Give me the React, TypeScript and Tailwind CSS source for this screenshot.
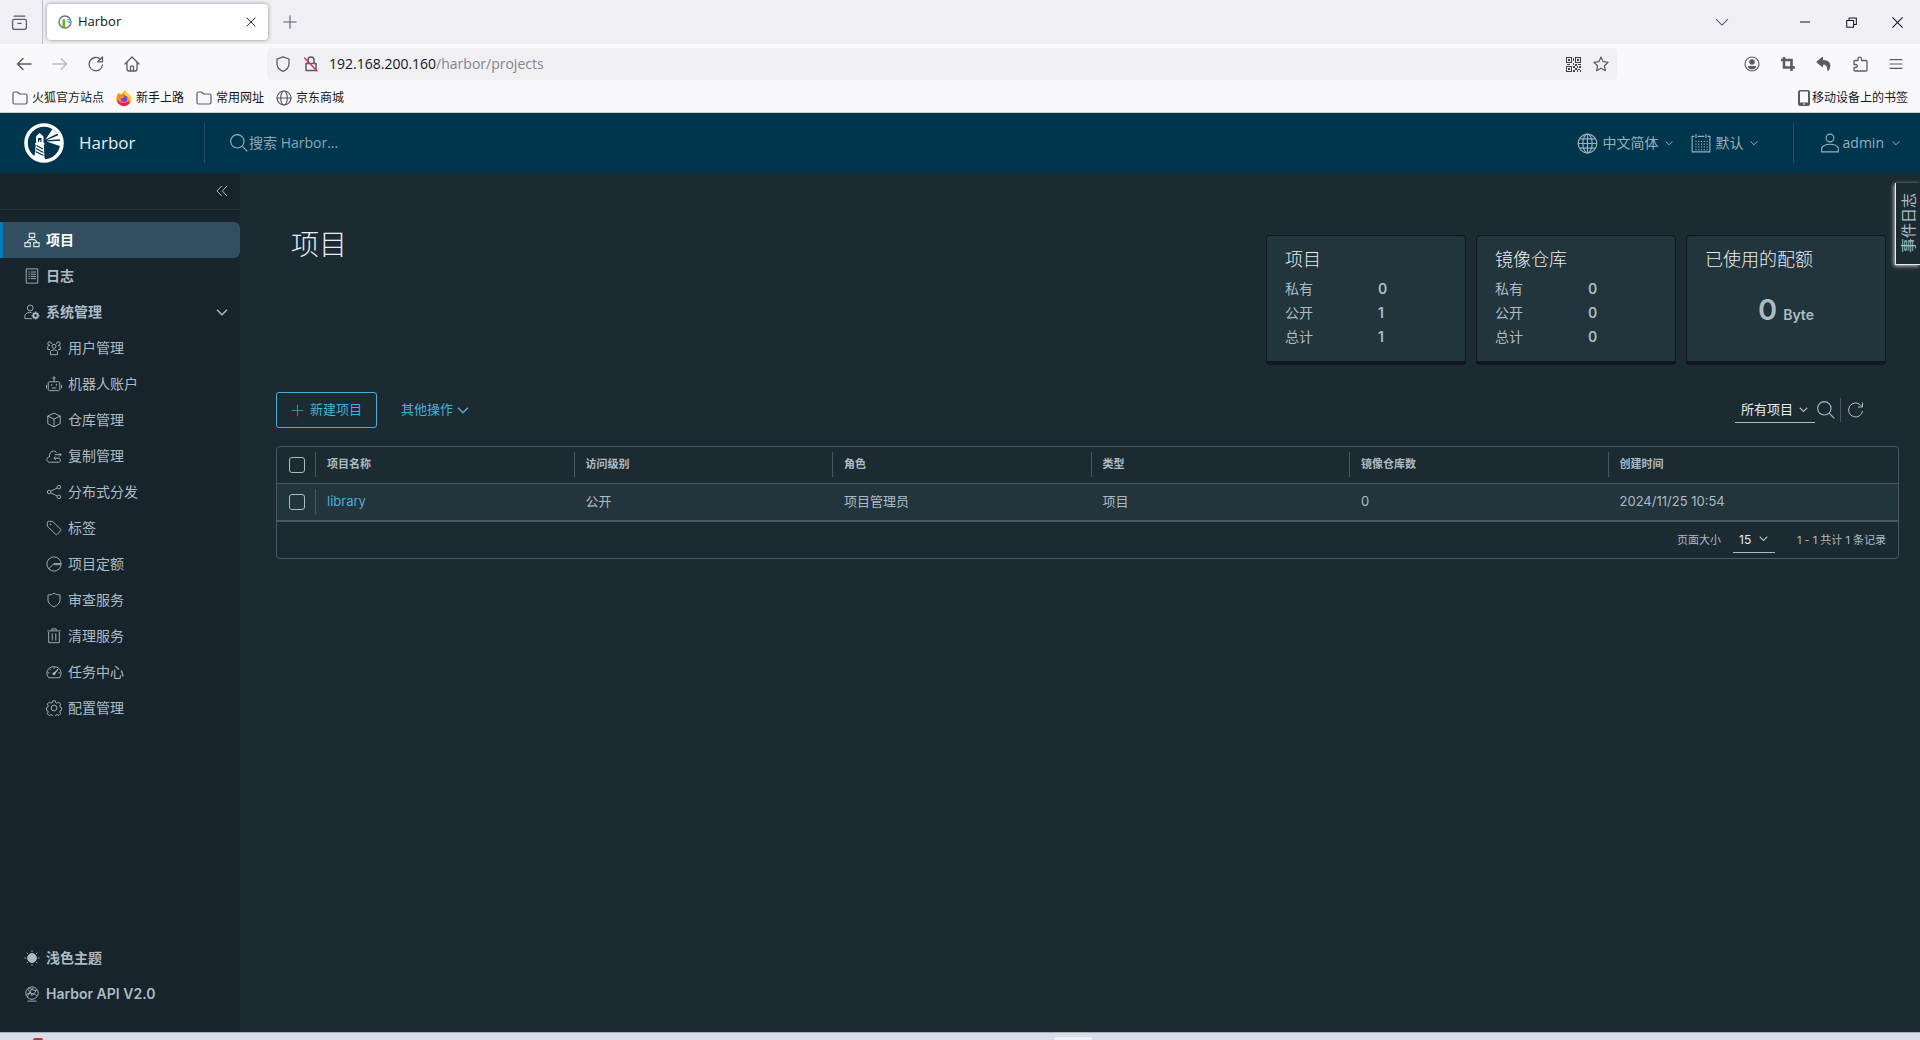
import type { ReactNode } from 'react';

type IconProps = { size?: number; className?: string; children: ReactNode };

// 36-unit outline icon used all over the Harbor UI
function Icon({ size = 16, className = '', children }: IconProps) {
  return (
    <svg
      width={size}
      height={size}
      viewBox="0 0 36 36"
      fill="none"
      stroke="currentColor"
      strokeWidth={2}
      className={`shrink-0 ${className}`}
      aria-hidden="true"
    >
      {children}
    </svg>
  );
}

// 16-unit icon used by the browser bars
function BarIcon({ size = 16, className = '', children }: IconProps) {
  return (
    <svg
      width={size}
      height={size}
      viewBox="0 0 16 16"
      fill="none"
      stroke="currentColor"
      strokeWidth={1.2}
      strokeLinecap="round"
      strokeLinejoin="round"
      className={`shrink-0 ${className}`}
      aria-hidden="true"
    >
      {children}
    </svg>
  );
}

const Chevron = ({ size = 10, className = '' }: { size?: number; className?: string }) => (
  <Icon size={size} className={className}>
    <path d="M3 11l15 15 15-15" strokeWidth={4.5} />
  </Icon>
);

const SearchIcon = ({ size = 20 }: { size?: number }) => (
  <Icon size={size}>
    <circle cx="15" cy="15" r="12" />
    <path d="M24 24l9 9" />
  </Icon>
);

const icons = {
  projects: (
    <>
      <path d="M12 3h12v9H12zM2 24h12v9H2zM22 24h12v9H22zM18 12v5M8 24v-3l4-4h12l4 4v3" strokeWidth={2.6} />
    </>
  ),
  logs: (
    <>
      <path d="M5 2h26v32H5z" />
      <path d="M10 9h3M10 14h3M10 19h3M10 24h3M15 9h12M15 14h12M15 19h12M15 24h12" />
    </>
  ),
  admin: (
    <>
      <circle cx="14" cy="9" r="6.5" />
      <path d="M18 33H2v-8c3-5 8-7 15-6" />
      <circle cx="26" cy="26" r="5" strokeWidth={4} />
      <path
        d="M26 17v3M26 32v3M17 26h3M32 26h3M20 20l2 2M30 30l2 2M32 20l-2 2M20 32l2-2"
        strokeWidth={3}
      />
    </>
  ),
  users: (
    <>
      <circle cx="18" cy="14" r="4.5" />
      <path d="M10 33v-7c2-5 14-5 16 0v7zM4 22v-7c0-2 2-3 5-3M32 22v-7c0-2-2-3-5-3M4 21l5 1M32 21l-5 1" />
      <path d="M12 9a4 4 0 1 0-4 3M24 9a4 4 0 1 1 4 3" />
    </>
  ),
  robot: (
    <>
      <path d="M8 13h20c3 0 3 3 3 3v14c0 3-3 3-3 3H8c-3 0-3-3-3-3V16s0-3 3-3zM18 13V7M1 20v8M35 20v8M13 27h10" />
      <circle cx="18" cy="4.500" r="2.500" />
      <circle cx="12.500" cy="20" r="1" />
      <circle cx="23.500" cy="20" r="1" />
    </>
  ),
  registries: <path d="M18 2.500l14 6.500v17l-14 7.500L4 26V9zM4 9l14 7 14-7M18 16v17" />,
  replication: (
    <>
      <path d="M30 24c4 2 4 8-3 8H8C0 32 0 20 8 20 6 7 20 3 24 11" />
      <path d="M20 15h14M30 11l4 4-4 4M31 23H18M22 19l-4 4 4 4" />
    </>
  ),
  share: (
    <>
      <circle cx="7" cy="18" r="4" />
      <circle cx="29" cy="7" r="4" />
      <circle cx="29" cy="29" r="4" />
      <path d="M11 16l14-7M11 20l14 7" />
    </>
  ),
  tag: (
    <>
      <path d="M3 5.500C3 4 4 3 5.500 3H15l18 18c1 1 1 2 0 3l-8 8.500c-1 1-2 1-3 0L3 14z" />
      <circle cx="10" cy="10" r="1" />
    </>
  ),
  quota: (
    <>
      <circle cx="18" cy="18" r="16" />
      <path d="M6 29l12-12h16M18 19.500h15" />
    </>
  ),
  shield: <path d="M18 2.500c4 3 8 4 13.500 4V17c0 8-6 13-13.500 16.500C10.500 30 4.500 25 4.500 17V6.500c5.500 0 9.500-1 13.500-4z" />,
  trash: <path d="M6 9v24h24V9M3 6.500h30M13 5V2h10v3M14 12v16M22 12v16" />,
  dashboard: (
    <>
      <path d="M6 31C-3 20 4 6 18 6s21 14 12 25zM18 7v4M4 20h4M28 20h4M8 11l3 3" />
      <path d="M18 22l9-10" strokeWidth={3} />
      <circle cx="18" cy="22" r="2.500" fill="currentColor" />
    </>
  ),
  cog: (
    <>
      <circle cx="18" cy="18" r="6.500" />
      <path d="M15 2h6l1 4 3 1 4-2 4 4-2 4 1 3 3 1v6l-3 1-1 3 2 4-4 4-4-2-3 1-1 3h-6l-1-3-3-1-4 2-4-4 2-4-1-3-3-1v-6l3-1 1-3-2-4 4-4 4 2 3-1z" />
    </>
  ),
  sun: (
    <>
      <circle cx="18" cy="18" r="10" fill="currentColor" />
      <path d="M18 1v4M18 31v4M1 18h4M31 18h4M6 6l3 3M27 27l3 3M30 6l-3 3M6 30l3-3" />
    </>
  ),
  api: (
    <>
      <circle cx="18" cy="16" r="14" />
      <path d="M7 7c5 2 9 8 10 14 4-1 9-6 10-12M8 26c1-9 7-17 14-22M5 19c8-4 18-3 24 3M10 4c6 2 10 7 18 6" />
      <path d="M8 34h20" />
    </>
  ),
};

const subItems: { label: string; icon: keyof typeof icons }[] = [
  { label: '用户管理', icon: 'users' },
  { label: '机器人账户', icon: 'robot' },
  { label: '仓库管理', icon: 'registries' },
  { label: '复制管理', icon: 'replication' },
  { label: '分布式分发', icon: 'share' },
  { label: '标签', icon: 'tag' },
  { label: '项目定额', icon: 'quota' },
  { label: '审查服务', icon: 'shield' },
  { label: '清理服务', icon: 'trash' },
  { label: '任务中心', icon: 'dashboard' },
  { label: '配置管理', icon: 'cog' },
];

const stats = [
  { title: '项目', rows: [['私有', '0'], ['公开', '1'], ['总计', '1']] },
  { title: '镜像仓库', rows: [['私有', '0'], ['公开', '0'], ['总计', '0']] },
];

const columns = ['项目名称', '访问级别', '角色', '类型', '镜像仓库数', '创建时间'];

const projects = [
  {
    name: 'library',
    access: '公开',
    role: '项目管理员',
    type: '项目',
    repos: 0,
    created: '2024/11/25 10:54',
  },
];

function HarborLogo() {
  return (
    <svg width="40" height="40" viewBox="0 0 40 40" className="shrink-0" aria-hidden="true">
      <circle cx="20" cy="20" r="18" fill="none" stroke="#fff" strokeWidth="3.600" />
      <path d="M15.500 10l4 3.500v6.500h1v1.500h-.7L20.500 36l-10-2.500 1.300-12h-.8V20h1v-6.500z" fill="#fff" />
      <path d="M14 15h3.500v4h-1.200v-2h-1.100v2H14z" fill="#00364d" />
      <path d="M12.500 22.500l6.500 3.500M12 25.500l7.500 4M11.500 28.500l8 4" stroke="#00364d" strokeWidth="1.300" />
      <path d="M21.500 16.500L28.500 6l5 4.500zM22.500 17.300L36 11.500v4.700zM22.500 18.500l15.500-.8v6z" fill="#fff" />
      <path d="M9 33c4-1 8 0 12 2.500l-1 3c-4 0-9-2-11-5.500z" fill="#fff" />
    </svg>
  );
}

function BrowserChrome() {
  const iconBtn = 'flex w-9 h-8 items-center justify-center';
  return (
    <div className="font-['Open_Sans','Noto_Sans_CJK_SC',sans-serif] text-[#15141a]">
      {/* Tabs */}
      <div className="flex h-11 items-center bg-[#f0eff4] text-[#5b5b66]">
        <button className="flex h-11 w-[43px] items-center justify-center border-r border-[#bfbfc9] pr-1" aria-label="历史标签">
          <BarIcon size={17}>
            <path d="M1.500 6.500c0-1 .5-1.500 1.500-1.500h10c1 0 1.500.5 1.500 1.500v6c0 1.500-.5 2-2 2h-9c-1.500 0-2-.5-2-2zM3 2h10M6.500 8.800h3" />
          </BarIcon>
        </button>
        <div className="ml-1 flex h-9 w-[221px] items-center rounded bg-white pl-[11px] pr-[7px] shadow-[0_0_4px_rgba(0,0,0,0.4)]">
          <svg width="14" height="14" viewBox="0 0 40 40" aria-hidden="true">
            <circle cx="20" cy="20" r="17" fill="#fff" stroke="#737373" strokeWidth="4" />
            <path d="M13 12h7v25l-7-3z" fill="#60b515" />
            <path d="M22 16l12-8 2 6zM22 18l15 0v7z" fill="#5aa7dc" />
          </svg>
          <span className="ml-[6px] flex-1 text-[13px] text-[#15141a]">Harbor</span>
          <button className="flex h-5 w-5 items-center justify-center text-[#15141a]" aria-label="关闭标签页">
            <BarIcon size={12}>
              <path d="M2.500 2.500l11 11M13.500 2.500l-11 11" />
            </BarIcon>
          </button>
        </div>
        <button className={`${iconBtn} ml-1`} aria-label="新建标签页">
          <BarIcon size={14}>
            <path d="M8 1v14M1 8h14" />
          </BarIcon>
        </button>
        <div className="flex-1" />
        <button className={iconBtn} aria-label="列出所有标签页">
          <BarIcon size={14}>
            <path d="M1.500 5L8 11.500 14.500 5" />
          </BarIcon>
        </button>
        <div className="ml-[42px] flex text-[#15141a]">
          <button className="flex h-8 w-[46px] items-center justify-center" aria-label="最小化">
            <BarIcon size={10}>
              <path d="M0 8h16" strokeWidth={1.6} />
            </BarIcon>
          </button>
          <button className="flex h-8 w-[46px] items-center justify-center" aria-label="还原">
            <BarIcon size={11}>
              <path d="M1 5h10v10H1zM4.500 5V1.500H15V11h-4" strokeWidth={1.5} />
            </BarIcon>
          </button>
          <button className="flex h-8 w-[46px] items-center justify-center" aria-label="关闭">
            <BarIcon size={11}>
              <path d="M1 1l14 14M15 1L1 15" strokeWidth={1.5} />
            </BarIcon>
          </button>
        </div>
      </div>

      {/* Address bar */}
      <div className="flex h-10 items-center bg-[#f9f9fb] pl-[6px] pr-[6px] text-[#5b5b66]">
        <button className={iconBtn} aria-label="后退">
          <BarIcon>
            <path d="M15 8H1.500M7 2.500L1.500 8 7 13.500" strokeWidth={1.5} />
          </BarIcon>
        </button>
        <button className={`${iconBtn} text-[#bcbcc2]`} aria-label="前进">
          <BarIcon>
            <path d="M1 8h13.500M9 2.500L14.500 8 9 13.500" strokeWidth={1.5} />
          </BarIcon>
        </button>
        <button className={iconBtn} aria-label="刷新">
          <BarIcon>
            <path d="M14.500 9A6.700 6.700 0 1 1 12.500 3.300M14.500 1v4.800H9.700z" strokeWidth={1.3} />
          </BarIcon>
        </button>
        <button className={iconBtn} aria-label="主页">
          <BarIcon>
            <path d="M1 8l7-7 7 7M3 6.500V13c0 1.500.5 2 2 2h6c1.500 0 2-.5 2-2V6.500M6.500 15v-4c0-1.500 3-1.500 3 0v4" strokeWidth={1.3} />
          </BarIcon>
        </button>
        <div className="ml-[117px] flex h-8 flex-1 items-center rounded bg-[#f0eff4] pl-2">
          <BarIcon>
            <path d="M8 .8l6 2.200v4.500c0 4-2.500 6.500-6 7.800-3.500-1.300-6-3.800-6-7.800V3z" strokeWidth={1.3} />
          </BarIcon>
          <BarIcon className="ml-3">
            <path d="M3 7.500h10v7H3zM5 7.500V4c0-4 6-4 6 0v3.500" strokeWidth={1.5} />
            <path d="M1.500 2L14 15" stroke="#e22850" strokeWidth={1.3} />
          </BarIcon>
          <div className="ml-[10px] flex-1 text-sm">
            <span className="text-[#15141a]">192.168.200.160</span>
            <span className="text-[#85848c]">/harbor/projects</span>
          </div>
          <svg width="15" height="15" viewBox="0 0 15 15" fill="currentColor" shapeRendering="crispEdges" className="text-[#3f3f48]" aria-hidden="true">
            <path
              fillRule="evenodd"
              d="M0 0h6v6H0zM1 1v4h4V1zM9 0h6v6H9zM10 1v4h4V1zM0 9h6v6H0zM1 10v4h4v-4zM2 2h2v2H2zM11 2h2v2h-2zM2 11h2v2H2zM7 1h1v3H7zM7 6h1v2H7zM1 7h3v1H1zM9 7h2v2H9zM12 7h3v1h-3zM7 9h2v2H7zM11 9h1v2h-1zM13 9h2v2h-2zM9 11h2v2H9zM12 12h2v1h-2zM7 13h2v2H7zM11 13h1v2h-1zM14 13h1v2h-1z"
            />
          </svg>
          <button className="ml-1 flex h-8 w-8 items-center justify-center" aria-label="添加书签">
            <BarIcon>
              <path d="M8 1l2.100 4.700 5.100.6-3.800 3.400 1 5L8 12.200l-4.400 2.500 1-5L.8 6.300l5.100-.6z" />
            </BarIcon>
          </button>
        </div>
        <div className="ml-[117px] flex">
          <button className={iconBtn} aria-label="账户">
            <BarIcon>
              <circle cx="8" cy="8" r="7" />
              <circle cx="8" cy="6" r="2.200" fill="currentColor" />
              <path d="M4.500 10.500h7c-1 3-6 3-7 0z" fill="currentColor" />
            </BarIcon>
          </button>
          <button className={iconBtn} aria-label="截图">
            <BarIcon>
              <path d="M4 1v10.500h11M1 4h10.500V15" strokeWidth={2.6} strokeLinecap="butt" strokeLinejoin="miter" />
            </BarIcon>
          </button>
          <button className={iconBtn} aria-label="撤销">
            <BarIcon>
              <path d="M6.500 1.500L1 6l5.500 4.500V8c3.500 0 5.500 1.500 5.500 6.500 3.500-5 2-10-5.500-10z" fill="currentColor" />
            </BarIcon>
          </button>
          <button className={iconBtn} aria-label="扩展">
            <BarIcon>
              <path d="M6 4.500V3c0-2.500 3.500-2.500 3.500 0v1.500H14c.5 0 1 .5 1 1V14c0 .5-.5 1-1 1H3c-.5 0-1-.5-1-1v-2.500h1.500c2.500 0 2.500-3 0-3H2v-3c0-.5.5-1 1-1z" strokeWidth={1.3} />
            </BarIcon>
          </button>
          <button className={iconBtn} aria-label="菜单">
            <BarIcon size={14}>
              <path d="M1 3h14M1 8h14M1 13h14" />
            </BarIcon>
          </button>
        </div>
      </div>

      {/* Bookmarks */}
      <div className="flex h-[29px] items-center gap-3 border-b border-[#cfcfcf] bg-[#f9f9fb] px-3 text-xs">
        <a href="#" className="flex items-center gap-1">
          <FolderIcon />
          火狐官方站点
        </a>
        <a href="#" className="flex items-center gap-1">
          <svg width="16" height="16" viewBox="0 0 16 16" aria-hidden="true">
            <path d="M8 16a7.500 7.500 0 0 1-7.500-8C.5 6 1.500 4 3 2.500l.5 1.700L6 4l3-4c.5 2 3 3 4.500 5 1 1 2 2 2 4A7.400 7.400 0 0 1 8 16z" fill="#ff8a16" />
            <path d="M8 16C4 16 1 13 .5 9c2 4 9 6 14 1-1 4-3.500 6-6.500 6z" fill="#f5156c" />
            <path d="M9 0c.5 2 3 3 4.500 5 1 1 2 2 2 4-.5 2-1.500 3-2.500 3 1-3-1-6-4-6.500C7.500 4 8 1.500 9 0z" fill="#ffd43a" />
            <circle cx="8" cy="8.800" r="3.200" fill="#7542e5" />
            <path d="M4 6c2-1 4 0 5 1-2 0-2 1-3 1.500C5 8.500 4 7.500 4 6z" fill="#ff9a1f" />
          </svg>
          新手上路
        </a>
        <a href="#" className="flex items-center gap-1">
          <FolderIcon />
          常用网址
        </a>
        <a href="#" className="flex items-center gap-1">
          <BarIcon className="text-[#5b5b66]">
            <circle cx="8" cy="8" r="7" />
            <ellipse cx="8" cy="8" rx="3.300" ry="7" />
            <path d="M1 8h14" />
          </BarIcon>
          京东商城
        </a>
        <a href="#" className="ml-auto flex items-center gap-[2px]">
          <svg width="12" height="16" viewBox="0 0 12 16" className="text-[#5b5b66]" aria-hidden="true">
            <path fillRule="evenodd" d="M2 0h8a2 2 0 0 1 2 2v12a2 2 0 0 1-2 2H2a2 2 0 0 1-2-2V2C0 1 1 0 2 0zm0 1.500v11h8v-11zM5 13.500v1h2v-1z" fill="currentColor" />
          </svg>
          移动设备上的书签
        </a>
      </div>
    </div>
  );
}

const FolderIcon = () => (
  <BarIcon className="text-[#5b5b66]">
    <path d="M1 12.500v-9c0-1 .5-1.500 1.500-1.500h3L7.500 4H13c1.500 0 2 .5 2 1.500v7c0 1-.5 1.500-1.500 1.500h-11c-1 0-1.500-.5-1.500-1.500z" />
  </BarIcon>
);

function Header() {
  return (
    <header className="flex h-[60px] shrink-0 items-center bg-[#00364d] pl-6 text-[#9bb0bb]">
      <HarborLogo />
      <a href="#" className="ml-[15px] w-[125px] font-['Open_Sans',sans-serif] text-[17px] leading-6 text-[#e9edf0]">
        Harbor
      </a>
      <label className="flex h-10 flex-1 items-center border-l border-[#264f63] pl-6">
        <SearchIcon />
        <input
          type="text"
          aria-label="搜索 Harbor"
          placeholder="搜索 Harbor..."
          className="w-[300px] bg-transparent font-['Open_Sans','Noto_Sans_CJK_SC',sans-serif] text-sm outline-none placeholder:text-[#8fa6b2]"
        />
      </label>
      <button className="flex items-center text-sm">
        <Icon size={21}>
          <circle cx="18" cy="18" r="16" />
          <ellipse cx="18" cy="18" rx="8" ry="16" />
          <path d="M18 2v32M2 18h32M5 10h26M5 26h26" />
        </Icon>
        <span className="ml-[5px] mr-[6px]">中文简体</span>
        <Chevron size={8} />
      </button>
      <button className="ml-[18px] flex items-center text-sm">
        <Icon size={20}>
          <path d="M6 6H2v28h32V6h-4M12 6h12M9 2v7M27 2v7" />
          <path d="M8 15h22M8 20h22M8 25h22M8 30h22" strokeDasharray="2 3" />
        </Icon>
        <span className="ml-[5px] mr-[6px]">默认</span>
        <Chevron size={8} />
      </button>
      <button className="ml-[35px] flex h-10 items-center border-l border-[#264f63] pl-[26px] pr-5 font-['Open_Sans',sans-serif] text-sm font-medium">
        <Icon size={20}>
          <circle cx="18" cy="9" r="7" />
          <path d="M3 34v-7c5-9 25-9 30 0v7z" />
        </Icon>
        <span className="ml-[3px] mr-2">admin</span>
        <Chevron size={8} />
      </button>
    </header>
  );
}

function Sidebar() {
  return (
    <nav className="flex w-60 shrink-0 flex-col bg-[#17242b] text-sm font-semibold">
      <div className="flex h-[37px] items-center justify-end border-b border-[#22343c] pr-3">
        <button aria-label="收起">
          <Icon size={12}>
            <path d="M17 3L3 18l14 15M33 3L19 18l14 15" strokeWidth={3} />
          </Icon>
        </button>
      </div>
      <a href="#" className="mt-3 flex h-9 items-center rounded-r-md border-l-[3px] border-[#0079b8] bg-[#324f62] pl-[21px] font-bold text-white">
        <Icon className="mr-[6px] text-[#d5dfe4]">{icons.projects}</Icon>
        项目
      </a>
      <a href="#" className="flex h-9 items-center pl-6">
        <Icon className="mr-[6px]">{icons.logs}</Icon>
        日志
      </a>
      <button className="flex h-9 items-center pl-6 pr-3">
        <Icon className="mr-[6px]">{icons.admin}</Icon>
        系统管理
        <Chevron size={12} className="ml-auto" />
      </button>
      {subItems.map((item) => (
        <a href="#" key={item.label} className="flex h-9 items-center pl-[46px] font-normal">
          <Icon className="mr-[6px]">{icons[item.icon]}</Icon>
          {item.label}
        </a>
      ))}
      <div className="mt-auto pb-5">
        <button className="flex h-9 w-full items-center pl-6">
          <Icon className="mr-[6px]">{icons.sun}</Icon>
          浅色主题
        </button>
        <a href="#" className="flex h-9 items-center pl-6">
          <Icon className="mr-[6px]">{icons.api}</Icon>
          Harbor API V2.0
        </a>
      </div>
    </nav>
  );
}

function StatCard({ title, children }: { title: string; children: ReactNode }) {
  return (
    <section className="h-[130px] w-[200px] rounded border border-b-4 border-[#10181d] bg-[#22343c] px-[18px] pt-3">
      <h2 className="text-lg font-light leading-6 text-[#eaedf0]">{title}</h2>
      {children}
    </section>
  );
}

function ProjectTable() {
  return (
    <div className="mt-[18px] rounded border border-[#495865]">
      <table className="w-full table-fixed text-left">
        <thead>
          <tr className="h-9 border-b border-[#495865] text-[11px] text-[#adbbc4]">
            <th className="w-[38px] pl-3">
              <Checkbox label="全选" />
            </th>
            {columns.map((c) => (
              <th key={c} className="font-bold">
                <div className="h-[25px] border-l border-[#495865] pl-[11px] leading-6">{c}</div>
              </th>
            ))}
            <td className="w-8" />
          </tr>
        </thead>
        <tbody>
          {projects.map((p) => (
            <tr key={p.name} className="h-[38px] border-b-2 border-[#495865] bg-[#22343c] text-[13px]">
              <td className="pl-3">
                <Checkbox label={p.name} />
              </td>
              <td>
                <div className="h-[25px] border-l border-[#495865] pl-[11px] leading-6">
                  <a href="#" className="text-[#4aaed9]">
                    {p.name}
                  </a>
                </div>
              </td>
              <td className="pl-3">{p.access}</td>
              <td className="pl-3">{p.role}</td>
              <td className="pl-3">{p.type}</td>
              <td className="pl-3">{p.repos}</td>
              <td className="pl-3">{p.created}</td>
              <td />
            </tr>
          ))}
        </tbody>
      </table>
      <div className="flex h-9 items-center justify-end pr-3 text-[11px]">
        <label htmlFor="page-size">页面大小</label>
        <div className="relative ml-3 border-b border-[#adbbc4]">
          <select id="page-size" className="h-6 w-[42px] appearance-none bg-transparent pl-[6px] text-xs text-[#eaedf0]">
            <option>15</option>
          </select>
          <Chevron size={9} className="pointer-events-none absolute right-[7px] top-[6px]" />
        </div>
        <span className="ml-[22px]">1 - 1 共计 1 条记录</span>
      </div>
    </div>
  );
}

const Checkbox = ({ label }: { label: string }) => (
  <input
    type="checkbox"
    aria-label={label}
    className="block h-4 w-4 appearance-none rounded-[3px] border border-[#adbbc4]"
  />
);

function Projects() {
  return (
    <main className="relative min-w-0 flex-1 bg-[#1c2a32] pl-9 pr-[21px] pt-[62px]">
      <div className="flex items-start justify-between pl-[15px] pr-[13px]">
        <h1 className="-mt-2 text-[28px] font-light leading-9 text-[#eaedf0]">项目</h1>
        <div className="flex gap-[10px]">
          {stats.map((s) => (
            <StatCard key={s.title} title={s.title}>
              <dl className="mt-[5px] text-sm leading-6">
                {s.rows.map(([k, v]) => (
                  <div key={k} className="flex">
                    <dt className="w-[93px]">{k}</dt>
                    <dd className="font-semibold">{v}</dd>
                  </div>
                ))}
              </dl>
            </StatCard>
          ))}
          <StatCard title="已使用的配额">
            <p className="mt-5 flex items-baseline justify-center gap-[6px] text-sm font-semibold leading-9">
              <span className="text-[29px]">0</span>
              <span>Byte</span>
            </p>
          </StatCard>
        </div>
      </div>

      <div className="mt-[27px] flex h-9 items-center text-[13px] text-[#4aaed9]">
        <button className="flex h-9 items-center gap-[6px] rounded-[3px] border border-[#4aaed9] px-[14px]">
          <Icon size={13} className="opacity-70">
            <path d="M18 2v32M2 18h32" strokeWidth={3} />
          </Icon>
          新建项目
        </button>
        <button className="ml-6 flex items-center gap-1">
          其他操作
          <Chevron size={12} />
        </button>
        <div className="ml-auto mr-[34px] flex items-center text-[#adbbc4]">
          <div className="relative border-b border-[#adbbc4]">
            <select aria-label="项目筛选" className="h-6 w-20 appearance-none bg-transparent pl-[6px] text-[13px] text-[#eaedf0]">
              <option>所有项目</option>
            </select>
            <Chevron size={9} className="pointer-events-none absolute right-[7px] top-[7px]" />
          </div>
          <button className="ml-[1px]" aria-label="搜索">
            <SearchIcon />
          </button>
          <button className="ml-1 h-6 border-l border-[#495865] pl-[6px]" aria-label="刷新">
            <Icon size={18}>
              <path d="M31 20A14 14 0 1 1 27 8l4 4M31 3v9h-9" />
            </Icon>
          </button>
        </div>
      </div>

      <ProjectTable />

      <button className="absolute right-0 top-[10px] flex h-[82px] w-[25px] items-center justify-center border-b border-l border-[#e6ebee] bg-[#1c2a32] pl-[3px] text-[15px] shadow-[-1px_1px_4px_#ccc]">
        <span className="rotate-180 [text-orientation:sideways] [writing-mode:vertical-rl]">事件日志</span>
      </button>
    </main>
  );
}

export default function App() {
  return (
    <div className="flex h-screen flex-col overflow-hidden bg-[#1c2a32]">
      <BrowserChrome />
      <div className="flex min-h-0 flex-1 flex-col font-['Inter','Noto_Sans_CJK_SC',sans-serif] text-[#adbbc4]">
        <Header />
        <div className="flex min-h-0 flex-1 overflow-hidden">
          <Sidebar />
          <Projects />
        </div>
      </div>
      {/* Top edge of the desktop taskbar */}
      <div className="flex h-2 shrink-0 items-end justify-between overflow-hidden border-t border-[#a9adb8] bg-[#dadeea]">
        <span className="ml-[33px] h-[2px] w-[10px] rounded-t-full bg-[#c0392b]" />
        <span className="mr-[828px] h-[3px] w-[38px] rounded-t bg-[#f0f2f8]" />
      </div>
    </div>
  );
}
